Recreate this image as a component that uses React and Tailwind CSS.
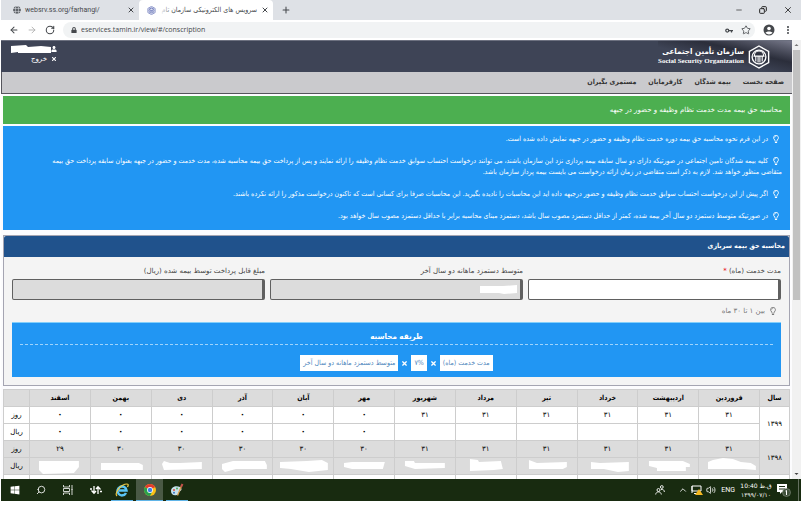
import React from "react";
import { FaRegLightbulb, FaTimes, FaUser, FaGlobe, FaLock, FaWindows } from "react-icons/fa";
import { ArrowLeft, ArrowRight, RotateCw, Plus, X, Star, Minus, Copy, EllipsisVertical, Search, ChevronUp, Volume2 } from "lucide-react";

const fa = "font-['DejaVu_Sans',sans-serif]";
const faNarrow = "font-['DejaVu_Sans_Condensed','DejaVu_Sans',sans-serif]";

const months = ["فروردین", "اردیبهشت", "خرداد", "تیر", "مرداد", "شهریور", "مهر", "آبان", "آذر", "دی", "بهمن", "اسفند"];
const days99 = ["۳۱", "۳۱", "۳۱", "۳۱", "۳۱", "۳۱", "۰", "۰", "۰", "۰", "۰", "۰"];
const rials99 = ["", "", "", "", "", "", "۰", "۰", "۰", "۰", "۰", "۰"];
const days98 = ["۳۱", "۳۱", "۳۱", "۳۱", "۳۱", "۳۱", "۳۰", "۳۰", "۳۰", "۳۰", "۳۰", "۲۹"];
const masks = [
  "M9 4L14 2 24 0 34 1 42 4 52 5 57 8V12L45 11H9Z",
  "M11 3H45L52 6V9H48V13H19V10L11 8Z",
  "M13 4L22 5 51 4V13L40 14 26 11H13Z",
  "M12 2L20 5 50 4V9L46 11H12Z",
  "M14 1L22 2 23 4 45 3 47 11 38 12 14 13Z",
  "M10 3H19L20 5H50V10L20 11 10 8Z",
  "M10 5L18 4H51L49 11H18L10 9Z",
  "M7 4L34 3 49 2 55 5V12L36 14 18 11 7 10Z",
  "M9 6L20 3 52 3 54 7V11H23L12 14 9 11Z",
  "M10 6L12 3 18 5 28 5 50 4V11L12 12Z",
  "M10 5H48L52 7V12H10Z",
  "M9 3H49V9L44 15 13 16 9 12Z",
];

const notes = [
  "در این فرم نحوه محاسبه حق بیمه دوره خدمت نظام وظیفه و حضور در جبهه نمایش داده شده است.",
  "کلیه بیمه شدگان تامین اجتماعی در صورتیکه دارای دو سال سابقه بیمه پردازی نزد این سازمان باشند، می توانند درخواست احتساب سوابق خدمت نظام وظیفه را ارائه نمایند و پس از پرداخت حق بیمه محاسبه شده، مدت خدمت و حضور در جبهه بعنوان سابقه پرداخت حق بیمه متقاضی منظور خواهد شد. لازم به ذکر است متقاضی در زمان ارائه درخواست می بایست بیمه پرداز سازمان باشد.",
  "اگر پیش از این درخواست احتساب سوابق خدمت نظام وظیفه و حضور درجبهه داده اید این محاسبات را نادیده بگیرید. این محاسبات صرفا برای کسانی است که تاکنون درخواست مذکور را ارائه نکرده باشند.",
  "در صورتیکه متوسط دستمزد دو سال آخر بیمه شده، کمتر از حداقل دستمزد مصوب سال باشد، دستمزد مبنای محاسبه برابر با حداقل دستمزد مصوب سال خواهد بود.",
];

function Emblem({ className }) {
  return (
    <svg viewBox="0 0 24 26" className={className} fill="none" stroke="currentColor">
      <path d="M12 1L22.500 7V19L12 25 1.500 19V7Z" strokeWidth="1.500" />
      <circle cx="12" cy="13" r="7.500" strokeWidth="1.500" />
      <path d="M7 11.500a5 5 0 0 1 10 0M6 12h12M8.500 12v6M11 12v7M13 12v7M15.500 12v6" strokeWidth="1.200" />
    </svg>
  );
}

function Browser() {
  return (
    <header className="shrink-0 font-['Roboto',sans-serif] text-[7px] text-[#45484c]">
      <div className="flex h-5 items-center bg-[#dee1e6]">
        <div className="flex h-full w-[138px] items-center gap-1 pl-3 pr-1">
          <FaGlobe className="size-2 text-[#5f6368]" />
          <span className="flex-1">websrv.ss.org/farhangi/</span>
          <button aria-label="Close tab"><X className="size-2" strokeWidth={3} /></button>
        </div>
        <div className="flex h-full w-[134px] items-center gap-1 rounded-t bg-white pl-2 pr-1">
          <Emblem className="size-[9px] shrink-0 text-[#2d3e9e]" />
          <div dir="rtl" className={`relative flex-1 whitespace-nowrap ${faNarrow}`}>
            سرویس های الکترونیکی سازمان تام
            <span className="absolute inset-y-0 left-0 w-3 bg-linear-to-r from-white to-transparent" />
          </div>
          <button aria-label="Close tab"><X className="size-2" strokeWidth={3} /></button>
        </div>
        <button aria-label="New tab" className="ml-2"><Plus className="size-2.5" strokeWidth={2.5} /></button>
        <div className="ml-auto flex items-center gap-4 pr-2 text-[#222]">
          <button aria-label="Minimize"><Minus className="size-2" /></button>
          <button aria-label="Restore"><Copy className="size-2 -scale-x-100" strokeWidth={3} /></button>
          <button aria-label="Close"><X className="size-2.5" strokeWidth={2} /></button>
        </div>
      </div>
      <div className="flex h-5 items-center gap-2 bg-white px-2">
        <button aria-label="Back"><ArrowLeft className="size-2.5" strokeWidth={2.5} /></button>
        <button aria-label="Forward"><ArrowRight className="size-2.5 text-[#aaa]" /></button>
        <button aria-label="Reload"><RotateCw className="size-2.5" strokeWidth={2.5} /></button>
        <div className="flex h-4 flex-1 items-center gap-1 rounded-full bg-[#f1f3f4] pl-2 pr-1">
          <FaLock className="size-1.5" />
          <input aria-label="Address" className="h-4 min-w-0 flex-1 bg-transparent font-['Open_Sans',sans-serif] leading-4 outline-none" defaultValue="eservices.tamin.ir/view/#/conscription" />
          <svg viewBox="0 0 16 10" className="h-[5px] w-2" fill="none" stroke="currentColor" strokeWidth="2.500"><circle cx="4.500" cy="5" r="3" /><path d="M7.500 5H16M13 5V9" /></svg>
          <button aria-label="Bookmark" className="ml-1"><Star className="size-2.5" /></button>
        </div>
        <button aria-label="Profile">
          <svg viewBox="0 0 12 12" className="size-3"><circle cx="6" cy="6" r="5.500" fill="#45484c" /><circle cx="6" cy="4.500" r="1.800" fill="#fff" /><path d="M2.500 9C3 7 9 7 9.500 9A5 5 0 0 1 2.500 9Z" fill="#fff" /></svg>
        </button>
        <button aria-label="Menu"><EllipsisVertical className="size-2.5" strokeWidth={3} /></button>
      </div>
    </header>
  );
}

function Field({ id, label, required, readOnly, masked }) {
  return (
    <div>
      <label htmlFor={id} className="block h-4 text-[7px] leading-4 text-[#444]">
        {label} {required && <span className="text-red-600">*</span>}
      </label>
      <div className="relative">
        <input id={id} readOnly={readOnly} className={`block h-[21px] w-full rounded-xs border border-r-3 border-[#606060] px-2 text-[8px] outline-none ${readOnly ? "bg-[#dcdcdc]" : "bg-white"}`} />
        {masked && <svg viewBox="0 0 38 10" className="absolute right-1.5 top-1.5 h-2.5 w-[38px]"><path d="M1 1L24 1 38 0V8L25 9 20 8H1Z" fill="#fff" /></svg>}
      </div>
    </div>
  );
}

const chip = "bg-white px-[3px] text-[7px] leading-4 text-[#4f87bd]";

function Calculator() {
  return (
    <section className="mt-[5px] border border-[#a5a5b2] bg-[#f4f4f4] pb-2">
      <h2 className={`h-[21px] rounded-t-xs bg-[#20528c] px-1 text-[7px] font-bold leading-5 text-white ${faNarrow}`}>محاسبه حق بیمه سربازی</h2>
      <div className="px-2">
        <div className="grid grid-cols-3 gap-[5px] pt-[6px]">
          <Field id="months" label="مدت خدمت (ماه)" required />
          <Field id="wage" label="متوسط دستمزد ماهانه دو سال آخر" readOnly masked />
          <Field id="payable" label="مبلغ قابل پرداخت توسط بیمه شده (ریال)" readOnly />
        </div>
        <p className="flex h-[22px] items-center gap-1 px-1 text-[7px] text-[#777]"><FaRegLightbulb className="size-2" />بین ۱ تا ۳۰ ماه</p>
        <div className={`h-[55px] border-t border-[#83cffb] bg-[#2196f3] px-2 pt-1 ${faNarrow}`}>
          <h3 className="h-[18px] border-b border-dashed border-[#9fd3fb] text-center text-[8px] font-bold leading-5 text-white">طریقه محاسبه</h3>
          <div className="flex items-center justify-center gap-[3px] pt-[10px] text-white">
            <span className={chip}>مدت خدمت (ماه)</span>
            <FaTimes className="size-[7px]" />
            <span className={chip}>۷%</span>
            <FaTimes className="size-[7px]" />
            <span className={chip}>متوسط دستمزد ماهانه دو سال آخر</span>
          </div>
        </div>
      </div>
    </section>
  );
}

const cell = "h-[17px] border border-[#cdcdcd] p-0 text-center";

function Num({ value }) {
  return <span className={value === "۰" ? "text-[8px] font-bold" : ""}>{value}</span>;
}

function History() {
  return (
    <table className="mt-[3px] w-full table-fixed border-collapse bg-white text-[7px] leading-3 text-black">
      <colgroup>
        <col className="w-[30px]" />
        {months.map((m) => <col key={m} />)}
        <col className="w-[26px]" />
      </colgroup>
      <thead className={faNarrow}>
        <tr className="bg-[#dcdcdc]">
          <th className={cell}>سال</th>
          {months.map((m) => <th key={m} className={cell}>{m}</th>)}
          <th className={cell}></th>
        </tr>
      </thead>
      <tbody>
        <tr>
          <td rowSpan={2} className={cell}>۱۳۹۹</td>
          {days99.map((d, i) => <td key={i} className={cell}><Num value={d} /></td>)}
          <td className={cell}>روز</td>
        </tr>
        <tr>
          {rials99.map((d, i) => <td key={i} className={cell}><Num value={d} /></td>)}
          <td className={cell}>ریال</td>
        </tr>
        <tr className="bg-[#dcdcdc]">
          <td rowSpan={2} className={cell}>۱۳۹۸</td>
          {days98.map((d, i) => <td key={i} className={cell}>{d}</td>)}
          <td className={cell}>روز</td>
        </tr>
        <tr className="bg-[#dcdcdc]">
          {masks.map((d, i) => (
            <td key={i} className={cell}><svg viewBox="0 0 60 16" className="block h-4 w-full"><path d={d} fill="#fff" /></svg></td>
          ))}
          <td className={cell}>ریال</td>
        </tr>
        <tr>
          <td className={cell}></td>
          {months.map((m) => <td key={m} className={cell}></td>)}
          <td className={cell}></td>
        </tr>
      </tbody>
    </table>
  );
}

function Page() {
  return (
    <div dir="rtl" className={`min-w-0 flex-1 overflow-hidden bg-[#fcfcfe] ${fa}`}>
      <div className="flex h-8 items-start justify-between border-t border-[#6d7180] bg-[#3e4456]">
        <div className="flex h-full items-center bg-linear-to-bl from-[#77798a] via-[#2b2e3b] via-35% to-[#3e4456] to-60% pr-[22px] text-white">
          <Emblem className="h-6 w-[22px]" />
          <div className="mr-1">
            <div className={`text-[8px] font-bold leading-[10px] ${faNarrow}`}>سازمان تأمین اجتماعی</div>
            <div dir="ltr" className="text-right font-['Liberation_Serif',serif] text-[7px] font-bold leading-[9px]">Social Security Organization</div>
          </div>
        </div>
        <div className="flex w-14 flex-col items-start pt-1 text-[7px] leading-3 text-white">
          <div className="flex w-full items-center"><FaUser className="size-1.5 shrink-0" /><svg viewBox="0 0 40 8" className="h-2 w-10"><path d="M0 1L15 0 17 2 30 1 40 2V8H7V7L0 8Z" fill="#fff" /></svg></div>
          <button className="flex items-center gap-1"><FaTimes className="size-1.5" />خروج</button>
        </div>
      </div>
      <nav className={`flex h-[22px] items-center gap-3 border-b border-l border-[#55555c] bg-[#cacacd] px-2 text-[7px] font-bold text-[#333] ${faNarrow}`}>
        <a href="#home">صفحه نخست</a>
        <a href="#insured">بیمه شدگان</a>
        <a href="#employers">کارفرمایان</a>
        <a href="#pensioners">مستمری بگیران</a>
      </nav>
      <main className="px-[2px] pt-[2px]">
        <h1 className="h-7 bg-[#4caf50] px-2 text-[7px] leading-7 text-white">محاسبه حق بیمه مدت خدمت نظام وظیفه و حضور در جبهه</h1>
        <ul className={`mt-[2px] flex flex-col gap-[11px] bg-[#2196f3] py-2 pl-8 pr-2 text-[7px] leading-[11px] text-white ${faNarrow}`}>
          {notes.map((n) => <li key={n}><FaRegLightbulb className="ml-1 mr-0.5 inline size-2" />{n}</li>)}
        </ul>
        <Calculator />
        <History />
      </main>
    </div>
  );
}

function Taskbar() {
  return (
    <footer className="flex h-[22px] shrink-0 items-center bg-[#182b10] text-white">
      <button aria-label="Start" className="grid h-full w-[27px] place-items-center"><FaWindows className="size-2.5" /></button>
      <button aria-label="Search" className="grid h-full w-[26px] place-items-center"><Search className="size-2.5 -scale-x-100" /></button>
      <button aria-label="Task view" className="grid h-full w-[27px] place-items-center"><svg viewBox="0 0 10 10" className="size-2.5" fill="none" stroke="currentColor" strokeWidth=".8"><path d="M.5 0v2H6.500V0M.5 10V8H6.500v2M.5 3.500H6.500v3H.5ZM9 0v10M8.500 4.500h1" /></svg></button>
      <button aria-label="Transfers" className="grid h-full w-[30px] place-items-center"><svg viewBox="0 0 12 10" className="h-2.5 w-3" fill="none" stroke="currentColor" strokeWidth="1.300"><path d="M4 1V8M1.500 5.500L4 8.200 6 6M8 9V2M6 4L8 1.800 10.500 4.500M0 4H2M10 6.500H12" /></svg></button>
      <button aria-label="Internet Explorer" className="grid h-full w-[22px] place-items-center border-b border-[#61b5e8]"><svg viewBox="0 0 14 14" className="size-3.5" fill="none"><path d="M11 10A4.500 4.500 0 1 1 11.500 7.500H4" stroke="#5bc5f5" strokeWidth="2.500" /><path d="M2 13C-1 10 6 1 12 1 14 1 13 3 12.500 4" stroke="#f1ca42" strokeWidth="1.200" /></svg></button>
      <button aria-label="Chrome" className="ml-[3px] grid h-full w-[27px] place-items-center border-b border-[#61b5e8] bg-[#4a5945]"><svg viewBox="0 0 12 12" className="size-3"><circle cx="6" cy="6" r="6" fill="#fbc116" /><path d="M6 6L.8 3A6 6 0 0 1 11.200 3Z" fill="#e33b2e" /><path d="M6 6L.8 3A6 6 0 0 0 6 12L8 8Z" fill="#2aa14c" /><circle cx="6" cy="6" r="2.900" fill="#fff" /><circle cx="6" cy="6" r="2.200" fill="#3e7de8" /></svg></button>
      <button aria-label="Paint" className="ml-[3px] grid h-full w-[22px] place-items-center border-b border-[#61b5e8]"><svg viewBox="0 0 14 14" className="size-3.5"><path d="M1 8C1 4 6 2 10 4 13 6 11 8 9 9 8 10 9 12 7 12 3 13 1 11 1 8Z" fill="#c5dfea" /><circle cx="4" cy="7" r="1" fill="#d64d3e" /><circle cx="7" cy="5.500" r="1" fill="#51a955" /><circle cx="4" cy="9.800" r="1" fill="#3a74c4" /><path d="M7.500 12.500L11.500 3" stroke="#d79c4d" strokeWidth="1.300" /><path d="M11 4L12.500 1" stroke="#c6534a" strokeWidth="2" /></svg></button>
      <div className="ml-auto flex h-full items-center gap-[3px] pr-[2px] font-['Roboto','DejaVu_Sans',sans-serif] text-[7px]">
        <button aria-label="People" className="mr-2.5"><svg viewBox="0 0 10 10" className="size-2.5" fill="none" stroke="currentColor" strokeWidth=".9"><circle cx="3.500" cy="5" r="1.500" /><path d="M.7 9.500C1 6 6 6 6.300 9.500" /><circle cx="6.800" cy="2" r="1.400" /><path d="M6 4.500C8 4 9.300 5 9.400 7" /></svg></button>
        <button aria-label="Hidden icons"><ChevronUp className="size-2.5" /></button>
        <svg viewBox="0 0 12 10" className="h-2.5 w-3" fill="none"><path d="M1 1H10V6H1ZM3 8.500H7M1 1V8" stroke="#fff" /><path d="M8 4L12 10H4Z" fill="#f5b921" /></svg>
        <Volume2 className="size-2.5" />
        <span className="ml-0.5">ENG</span>
        <div className={`mx-0.5 w-8 text-center text-[6px] leading-[9px] ${fa}`}><div dir="rtl" className="whitespace-nowrap">ق.ظ 10:40</div><div className="whitespace-nowrap">۱۳۹۹/۰۷/۱۰</div></div>
        <button aria-label="Notifications"><svg viewBox="0 0 14 14" className="size-3.5"><path d="M0 1H10V9H5L3 11V9H0Z" fill="#fff" /><path d="M2 3.500H8M2 6H8" stroke="#182b10" /><circle cx="9.500" cy="9.500" r="4" fill="#40513b" stroke="#9aa596" strokeWidth=".5" /><path d="M8.500 8L9.500 7.500V12" stroke="#fff" fill="none" /></svg></button>
        <span className="ml-1 h-full w-px bg-[#64705f]" />
      </div>
    </footer>
  );
}

export default function App() {
  return (
    <div className="flex h-screen flex-col overflow-hidden bg-white pb-1 pl-px pr-px">
      <Browser />
      <div className="flex min-h-0 flex-1">
        <Page />
        <div className="flex w-[9px] shrink-0 flex-col items-center bg-[#f1f1f1]">
          <svg viewBox="0 0 9 10" className="h-2.5 w-[9px]"><path d="M2.500 6L4.500 4 6.500 6Z" fill="#777" /></svg>
          <div className="h-[250px] w-[7px] bg-[#c1c1c1]" />
          <svg viewBox="0 0 9 10" className="mt-auto h-2.5 w-[9px]"><path d="M2.500 4L4.500 6 6.500 4Z" fill="#444" /></svg>
        </div>
      </div>
      <Taskbar />
    </div>
  );
}
